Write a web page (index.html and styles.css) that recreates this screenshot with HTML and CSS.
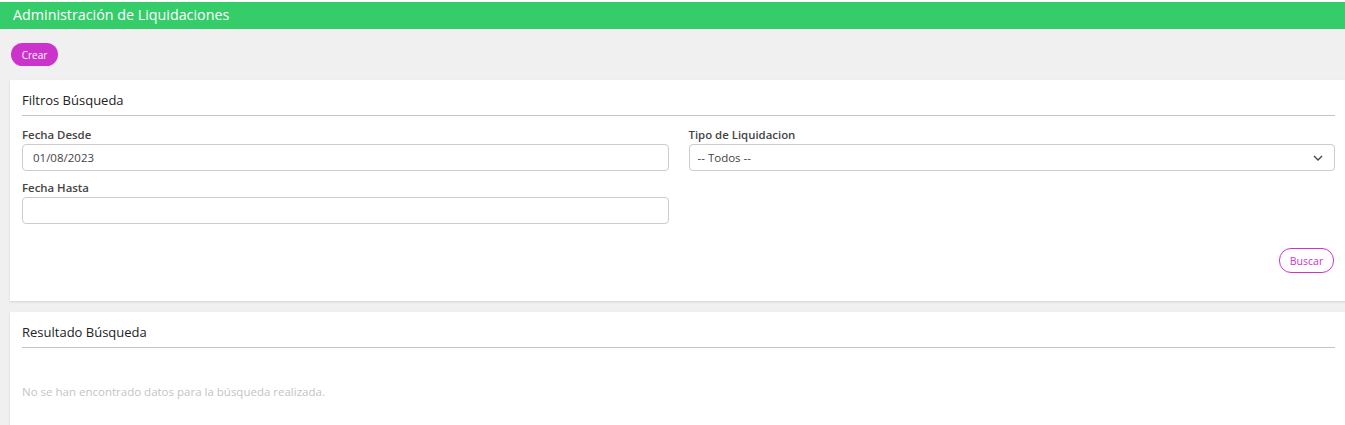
FILE: index.html
```html
<!DOCTYPE html>
<html lang="es">
<head>
<meta charset="utf-8">
<title>Administración de Liquidaciones</title>
<link rel="stylesheet" href="styles.css">
</head>
<body>
<header class="page-header">Administración de Liquidaciones</header>
<div class="toolbar">
  <button class="btn btn-primary">Crear</button>
</div>
<section class="card">
  <h2 class="card-title">Filtros Búsqueda</h2>
  <div class="filters">
    <div class="col">
      <div class="field">
        <label class="label">Fecha Desde</label>
        <div class="input">01/08/2023</div>
      </div>
      <div class="field">
        <label class="label">Fecha Hasta</label>
        <div class="input"></div>
      </div>
    </div>
    <div class="col">
      <div class="field">
        <label class="label">Tipo de Liquidacion</label>
        <div class="input select">
          <span class="select-text">-- Todos --</span>
          <svg class="chevron" width="10" height="6" viewBox="0 0 10 6"><path d="M1 1 L5 5 L9 1" fill="none" stroke="#444" stroke-width="1.3"/></svg>
        </div>
      </div>
    </div>
  </div>
  <div class="actions">
    <button class="btn btn-outline">Buscar</button>
  </div>
</section>
<section class="card card-results">
  <h2 class="card-title">Resultado Búsqueda</h2>
  <p class="empty">No se han encontrado datos para la búsqueda realizada.</p>
</section>
</body>
</html>
```
FILE: styles.css
```css
html, body {
  margin: 0;
  padding: 0;
  background: #f0f0f0;
  overflow: hidden;
  font-family: "Open Sans", "Noto Sans", sans-serif;
}
.page-header {
  border-top: 2px solid #ffffff;
  background: #35cc6a;
  color: #ffffff;
  height: 27px;
  line-height: 25px;
  padding-left: 13px;
  font-size: 14.3px;
  box-sizing: content-box;
}
.toolbar {
  padding: 14px 0 14px 11px;
  display: flex;
}
.btn {
  font-family: "Open Sans", "Noto Sans", sans-serif;
  border-radius: 12px;
  cursor: pointer;
}
.btn-primary {
  background: #cc33cc;
  color: #ffffff;
  border: none;
  height: 23px;
  width: 47px;
  font-size: 10px;
  padding: 0;
}
.card {
  margin-left: 10px;
  width: 1337px;
  background: #ffffff;
  box-shadow: 0 1px 2px rgba(0,0,0,0.12);
  padding: 10px 12px 28px 12px;
  box-sizing: border-box;
}
.card-results {
  margin-top: 11px;
  height: 114px;
}
.card-title {
  margin: 0;
  font-size: 13px;
  font-weight: 500;
  color: #222222;
  line-height: 20px;
  padding-bottom: 5px;
  border-bottom: 1px solid #c4c4c4;
}
.filters {
  display: grid;
  grid-template-columns: 1fr 1fr;
  column-gap: 20px;
  margin-top: 9px;
}
.field {
  margin-bottom: 8px;
}
.field:last-child {
  margin-bottom: 0;
}
.label {
  display: block;
  font-size: 11.4px;
  font-weight: 600;
  color: #444444;
  line-height: 17px;
  margin-top: 1px;
  margin-bottom: 1px;
}
.input {
  height: 27px;
  border: 1px solid #cccccc;
  border-radius: 4px;
  box-sizing: border-box;
  padding: 0 10px;
  font-size: 11.5px;
  color: #444444;
  line-height: 25px;
}
.select {
  display: flex;
  justify-content: space-between;
  align-items: center;
  padding: 0 10px 0 8px;
}
.chevron {
  margin-right: 1px;
}
.actions {
  display: flex;
  justify-content: flex-end;
  margin-top: 24px;
}
.btn-outline {
  background: #ffffff;
  color: #cc33cc;
  border: 1px solid #cc33cc;
  height: 25px;
  width: 55px;
  font-size: 10.5px;
  padding: 0;
  margin-right: 1px;
}
.empty {
  margin: 35px 0 0 0;
  font-size: 11.5px;
  color: #c4c4c4;
  line-height: 18px;
}
```
